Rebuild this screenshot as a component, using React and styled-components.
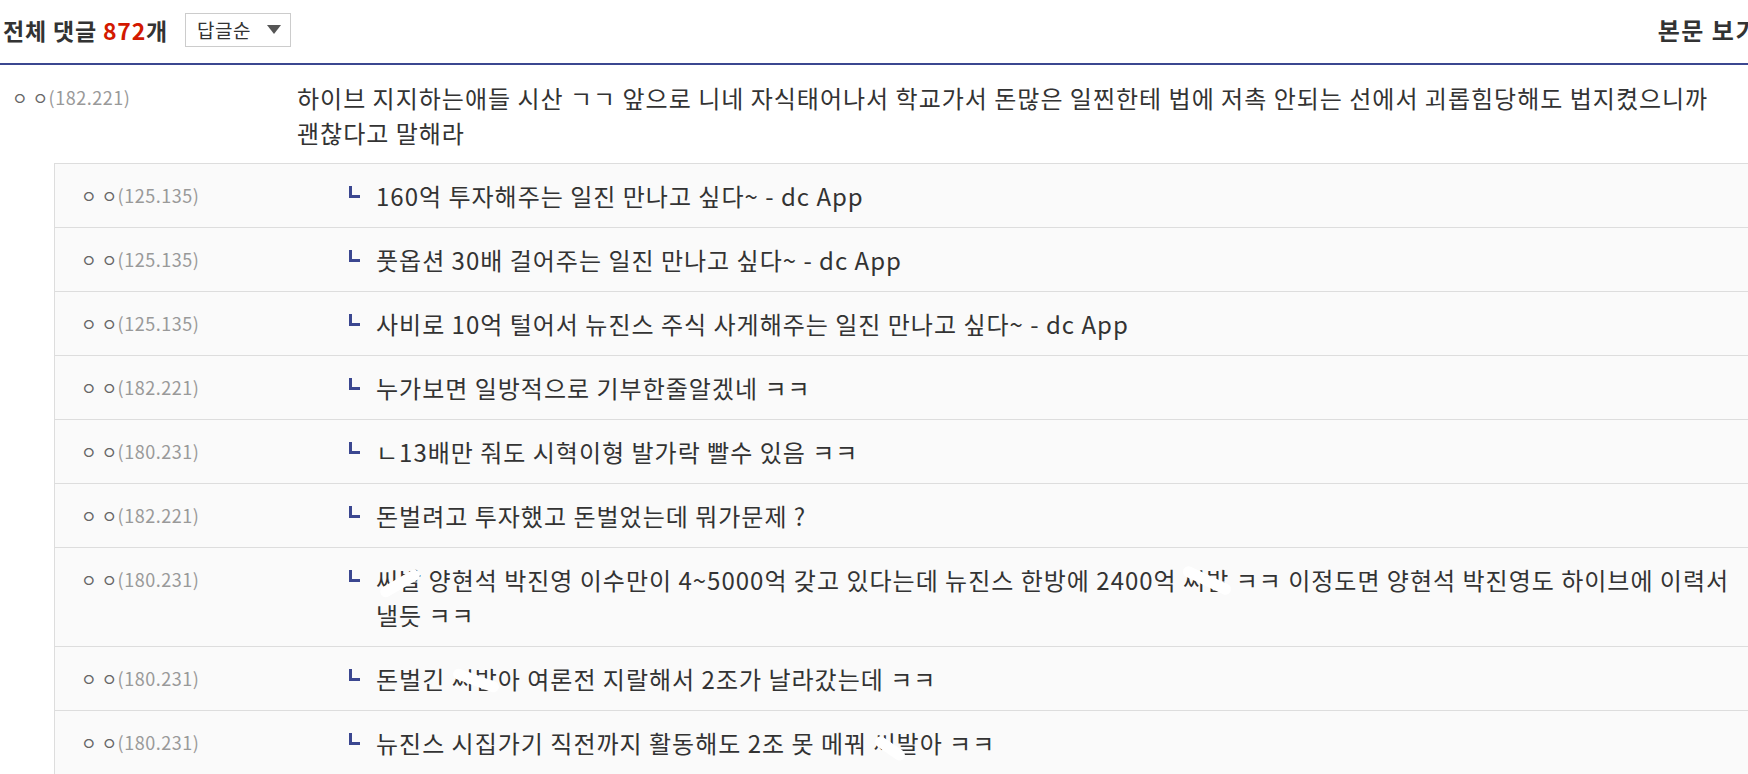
import React from "react";
import styled, { createGlobalStyle } from "styled-components";

const Global = createGlobalStyle`
  html, body { margin: 0; padding: 0; background: #fff; overflow: hidden; }
  body { font-family: "Noto Sans CJK KR", "Noto Sans", sans-serif; color: #333; }
`;

const Page = styled.div`
  width: 1790px;
`;

const Header = styled.div`
  display: flex;
  align-items: center;
  height: 65px;
  padding: 0 0 4px 3px;
  box-sizing: border-box;
  border-bottom: 2px solid #3b4790;
`;

const Title = styled.h2`
  margin: 0;
  font-size: 23px;
  font-weight: 700;
  color: #333;
  letter-spacing: 0.8px;
`;

const Count = styled.span`
  color: #d31900;
`;

const SortSelect = styled.div`
  display: flex;
  align-items: center;
  justify-content: space-between;
  margin-left: 17px;
  width: 106px;
  height: 34px;
  box-sizing: border-box;
  border: 1px solid #ccc;
  padding: 0 9px 0 11px;
  font-size: 19px;
  letter-spacing: 0.5px;
  color: #333;
`;

const Caret = styled.span`
  width: 0;
  height: 0;
  border-left: 7px solid transparent;
  border-right: 7px solid transparent;
  border-top: 9px solid #555;
`;

const ViewBody = styled.div`
  margin-left: auto;
  margin-right: 31px;
  font-size: 24px;
  font-weight: 700;
  letter-spacing: 1.5px;
  color: #333;
  white-space: nowrap;
`;

const Comment = styled.div`
  display: flex;
  padding: 15px 0 13px 12px;
`;

const Nick = styled.div`
  flex: 0 0 ${(p) => p.$w}px;
  font-size: 18px;
  letter-spacing: 0.5px;
  line-height: 35px;
  color: #999;
  white-space: nowrap;
`;

const NickName = styled.span`
  color: #666;
  font-size: 17px;
`;

const Text = styled.div`
  flex: 1;
  font-size: 24px;
  letter-spacing: 1px;
  line-height: 35px;
  color: #333;
  padding-right: ${(p) => p.$pr || 0}px;
  word-break: keep-all;
`;

const ReplyBox = styled.div`
  margin-left: 54px;
  background: #fafafa;
  border-top: 1px solid #ddd;
  border-left: 1px solid #ddd;
`;

const Reply = styled.div`
  display: flex;
  align-items: flex-start;
  padding: 14px 0 14px 26px;
  border-bottom: 1px solid #ddd;
`;

const ReplyMark = styled.span`
  flex: 0 0 auto;
  width: 8px;
  height: 9px;
  margin: 8px 16px 0 0;
  border-left: 3px solid #3b4790;
  border-bottom: 3px solid #3b4790;
`;

const Censor = styled.span`
  position: relative;
  &::after {
    content: "";
    position: absolute;
    left: ${(p) => p.$x}px;
    top: ${(p) => p.$y}px;
    width: ${(p) => p.$w}px;
    height: 11px;
    background: #fff;
    border-radius: 6px;
    transform: rotate(${(p) => p.$r}deg);
  }
`;

const replies = [
  { ip: "125.135", text: "160억 투자해주는 일진 만나고 싶다~ - dc App" },
  { ip: "125.135", text: "풋옵션 30배 걸어주는 일진 만나고 싶다~ - dc App" },
  { ip: "125.135", text: "사비로 10억 털어서 뉴진스 주식 사게해주는 일진 만나고 싶다~ - dc App" },
  { ip: "182.221", text: "누가보면 일방적으로 기부한줄알겠네 ㅋㅋ" },
  { ip: "180.231", text: "ㄴ13배만 줘도 시혁이형 발가락 빨수 있음 ㅋㅋ" },
  { ip: "182.221", text: "돈벌려고 투자했고 돈벌었는데 뭐가문제 ?" },
  {
    ip: "180.231",
    text: (
      <>
        <Censor $x={2} $y={16} $w={44} $r={-30}>씨발</Censor> 양현석 박진영 이수만이 4~5000억 갖고 있다는데 뉴진스 한방에 2400억{" "}
        <Censor $x={-2} $y={13} $w={52} $r={25}>씨발</Censor> ㅋㅋ 이정도면 양현석 박진영도 하이브에 이력서 낼듯 ㅋㅋ
      </>
    ),
  },
  {
    ip: "180.231",
    text: (
      <>
        돈벌긴 <Censor $x={0} $y={14} $w={48} $r={20}>씨발</Censor>아 여론전 지랄해서 2조가 날라갔는데 ㅋㅋ
      </>
    ),
  },
  {
    ip: "180.231",
    text: (
      <>
        뉴진스 시집가기 직전까지 활동해도 2조 못 메꿔 <Censor $x={0} $y={18} $w={34} $r={35}>씨발</Censor>아 ㅋㅋ
      </>
    ),
  },
];

function NickLabel({ ip }) {
  return (
    <>
      <NickName>ㅇ ㅇ</NickName>({ip})
    </>
  );
}

export default function App() {
  return (
    <Page>
      <Global />
      <Header>
        <Title>
          전체 댓글 <Count>872</Count>개
        </Title>
        <SortSelect>
          답글순 <Caret />
        </SortSelect>
        <ViewBody>본문 보기</ViewBody>
      </Header>
      <Comment>
        <Nick $w={285}>
          <NickLabel ip="182.221" />
        </Nick>
        <Text $pr={40}>
          하이브 지지하는애들 시산 ㄱㄱ 앞으로 니네 자식태어나서 학교가서 돈많은 일찐한테 법에 저촉 안되는 선에서 괴롭힘당해도 법지켰으니까 괜찮다고 말해라
        </Text>
      </Comment>
      <ReplyBox>
        {replies.map((r, i) => (
          <Reply key={i}>
            <Nick $w={268}>
              <NickLabel ip={r.ip} />
            </Nick>
            <ReplyMark />
            <Text $pr={40}>{r.text}</Text>
          </Reply>
        ))}
      </ReplyBox>
    </Page>
  );
}
